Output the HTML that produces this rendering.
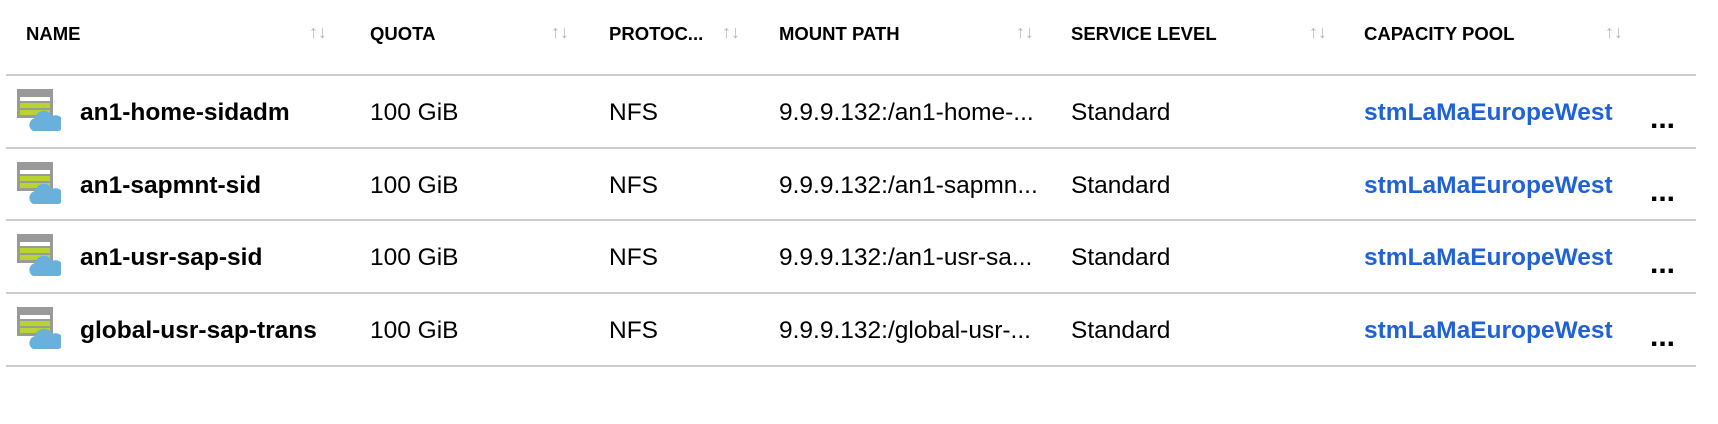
<!DOCTYPE html><html><head><style>
body{margin:0;width:1718px;height:424px;background:#fff;font-family:"Liberation Sans",sans-serif;position:relative;overflow:hidden;color:#000}
.h{position:absolute;top:23px;font-size:18.5px;font-weight:bold}
.s{position:absolute;top:22px;font-size:18px;color:#b8b8b8}
.l{position:absolute;left:6px;width:1690px;height:2px;background:#ccc}
.t{position:absolute;font-size:24.5px;line-height:28px}
.b{font-weight:bold}
.a{color:#1f62d6;font-weight:bold}
.d{position:absolute;left:1650px;font-size:30px;font-weight:bold;line-height:30px}
.ic{position:absolute;left:17px}
</style></head><body>
<div class="h" style="left:26px">NAME</div><div class="s" style="left:309px">↑↓</div>
<div class="h" style="left:370px">QUOTA</div><div class="s" style="left:551px">↑↓</div>
<div class="h" style="left:609px">PROTOC...</div><div class="s" style="left:722px">↑↓</div>
<div class="h" style="left:779px">MOUNT PATH</div><div class="s" style="left:1016px">↑↓</div>
<div class="h" style="left:1071px">SERVICE LEVEL</div><div class="s" style="left:1309px">↑↓</div>
<div class="h" style="left:1364px">CAPACITY POOL</div><div class="s" style="left:1605px">↑↓</div>
<div class="l" style="top:74px"></div>
<div class="l" style="top:147px"></div>
<div class="l" style="top:219px"></div>
<div class="l" style="top:292px"></div>
<div class="l" style="top:365px"></div>

<svg class="ic" style="top:89px" width="44" height="43" viewBox="0 0 44 43"><rect x="0" y="0" width="36" height="29" fill="#9a9a9a"/><rect x="3" y="8" width="30" height="4" fill="#fff"/><rect x="3" y="14" width="30" height="5" fill="#b8d432"/><rect x="3" y="21" width="30" height="5" fill="#b8d432"/><path d="M16 42 a7 7 0 0 1 2-13 a9 9 0 0 1 17-2 a7 7 0 0 1 7 15 z" fill="#69b1dc"/></svg>
<svg class="ic" style="top:162px" width="44" height="43" viewBox="0 0 44 43"><rect x="0" y="0" width="36" height="29" fill="#9a9a9a"/><rect x="3" y="8" width="30" height="4" fill="#fff"/><rect x="3" y="14" width="30" height="5" fill="#b8d432"/><rect x="3" y="21" width="30" height="5" fill="#b8d432"/><path d="M16 42 a7 7 0 0 1 2-13 a9 9 0 0 1 17-2 a7 7 0 0 1 7 15 z" fill="#69b1dc"/></svg>
<svg class="ic" style="top:234px" width="44" height="43" viewBox="0 0 44 43"><rect x="0" y="0" width="36" height="29" fill="#9a9a9a"/><rect x="3" y="8" width="30" height="4" fill="#fff"/><rect x="3" y="14" width="30" height="5" fill="#b8d432"/><rect x="3" y="21" width="30" height="5" fill="#b8d432"/><path d="M16 42 a7 7 0 0 1 2-13 a9 9 0 0 1 17-2 a7 7 0 0 1 7 15 z" fill="#69b1dc"/></svg>
<svg class="ic" style="top:307px" width="44" height="43" viewBox="0 0 44 43"><rect x="0" y="0" width="36" height="29" fill="#9a9a9a"/><rect x="3" y="8" width="30" height="4" fill="#fff"/><rect x="3" y="14" width="30" height="5" fill="#b8d432"/><rect x="3" y="21" width="30" height="5" fill="#b8d432"/><path d="M16 42 a7 7 0 0 1 2-13 a9 9 0 0 1 17-2 a7 7 0 0 1 7 15 z" fill="#69b1dc"/></svg>

<div class="t b" style="left:80px;top:99px">an1-home-sidadm</div><div class="t" style="left:370px;top:99px">100 GiB</div><div class="t" style="left:609px;top:99px">NFS</div><div class="t" style="left:779px;top:99px">9.9.9.132:/an1-home-...</div><div class="t" style="left:1071px;top:99px">Standard</div><div class="t a" style="left:1364px;top:99px">stmLaMaEuropeWest</div><div class="d" style="top:104px">...</div>
<div class="t b" style="left:80px;top:172px">an1-sapmnt-sid</div><div class="t" style="left:370px;top:172px">100 GiB</div><div class="t" style="left:609px;top:172px">NFS</div><div class="t" style="left:779px;top:172px">9.9.9.132:/an1-sapmn...</div><div class="t" style="left:1071px;top:172px">Standard</div><div class="t a" style="left:1364px;top:172px">stmLaMaEuropeWest</div><div class="d" style="top:177px">...</div>
<div class="t b" style="left:80px;top:244px">an1-usr-sap-sid</div><div class="t" style="left:370px;top:244px">100 GiB</div><div class="t" style="left:609px;top:244px">NFS</div><div class="t" style="left:779px;top:244px">9.9.9.132:/an1-usr-sa...</div><div class="t" style="left:1071px;top:244px">Standard</div><div class="t a" style="left:1364px;top:244px">stmLaMaEuropeWest</div><div class="d" style="top:249px">...</div>
<div class="t b" style="left:80px;top:317px">global-usr-sap-trans</div><div class="t" style="left:370px;top:317px">100 GiB</div><div class="t" style="left:609px;top:317px">NFS</div><div class="t" style="left:779px;top:317px">9.9.9.132:/global-usr-...</div><div class="t" style="left:1071px;top:317px">Standard</div><div class="t a" style="left:1364px;top:317px">stmLaMaEuropeWest</div><div class="d" style="top:322px">...</div>
</body></html>
